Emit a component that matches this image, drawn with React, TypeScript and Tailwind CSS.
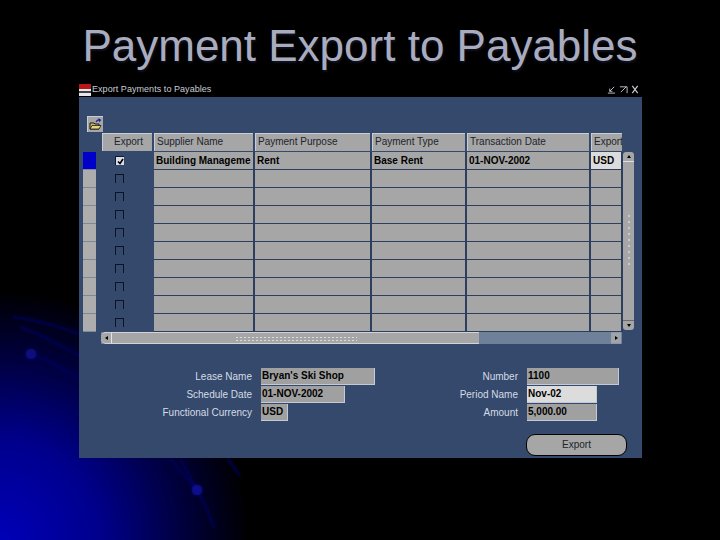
const columns = [
  { name: "Supplier Name", width: "w-[101px]", value: "Building Manageme" },
  { name: "Payment Purpose", width: "w-[117px]", value: "Rent" },
  { name: "Payment Type", width: "w-[95px]", value: "Base Rent" },
  { name: "Transaction Date", width: "w-[124px]", value: "01-NOV-2002" },
];

const rows = [0, 1, 2, 3, 4, 5, 6, 7, 8, 9];

function Backdrop() {
  return (
    <svg className="absolute inset-0" width="720" height="540" viewBox="0 0 720 540" aria-hidden="true">
      <defs>
        <radialGradient id="glow" cx="0" cy="540" r="250" gradientUnits="userSpaceOnUse">
          <stop offset="0" stopColor="#0000b8" />
          <stop offset="0.4" stopColor="#00008c" />
          <stop offset="0.72" stopColor="#000040" />
          <stop offset="1" stopColor="#000000" />
        </radialGradient>
        <filter id="soft">
          <feGaussianBlur stdDeviation="0.8" />
        </filter>
      </defs>
      <rect width="720" height="540" fill="#000" />
      <rect width="720" height="540" fill="url(#glow)" />
      <g fill="none" stroke="#06065e" strokeWidth="2" filter="url(#soft)">
        <path d="M13 317 C35 320 58 326 80 334" />
        <path d="M20 327 C40 334 60 345 80 356" />
        <path d="M31 354 C48 360 65 370 80 378" />
        <path d="M170 458 C180 472 190 482 197 490 C205 503 210 516 214 528" />
        <path d="M180 458 C186 470 192 480 197 490" />
        <path d="M227 458 C232 464 236 470 240 476" />
      </g>
      <circle cx="31" cy="354" r="5.5" fill="#0a0a80" filter="url(#soft)" />
      <circle cx="197" cy="490" r="5.5" fill="#0a0a90" filter="url(#soft)" />
    </svg>
  );
}

function FolderIcon() {
  return (
    <svg width="13" height="13" viewBox="0 0 13 13" aria-hidden="true">
      <path d="M1 5 H5 L6 6 H10 V11 H1 Z" fill="#c8b868" stroke="#1a1a10" strokeWidth="1" />
      <path d="M1 11 L3 7.5 H12 L10 11 Z" fill="#e4d488" stroke="#1a1a10" strokeWidth="0.8" />
      <path d="M7 4 C8 2 9 1.5 11 2 M9.5 0.8 L11.5 2 L10 3.6" fill="none" stroke="#1820a0" strokeWidth="1.1" />
    </svg>
  );
}

function Checkbox({ checked }: { checked?: boolean }) {
  return (
    <span className="flex h-[18px] items-start justify-center pt-[4px]">
      {checked ? (
        <span className="flex h-[9px] w-[9px] items-center justify-center border-t border-l border-[#10182a] bg-[#d8dce4]">
          <svg width="7" height="7" viewBox="0 0 7 7" aria-hidden="true">
            <path d="M1 3.5 L3 5.5 L6 1" fill="none" stroke="#000" strokeWidth="1.6" />
          </svg>
        </span>
      ) : (
        <span className="h-[9px] w-[9px] border-t border-r border-l border-[#0c1424]" />
      )}
    </span>
  );
}

function Cell({ width, value, light }: { width: string; value?: string; light?: boolean }) {
  return (
    <div
      className={`${width} h-[18px] shrink-0 overflow-hidden border-r-2 border-b border-[#2c3f5f] pl-[2px] text-[10px] leading-[17px] font-bold whitespace-nowrap text-black ${
        light && value ? "bg-[#dcdcdc]" : "bg-[#a6a6a6]"
      }`}
    >
      {value}
    </div>
  );
}

function HeaderCell({ width, name, center }: { width: string; name: string; center?: boolean }) {
  return (
    <div className={`${width} h-[18px] shrink-0 pr-[2px]`}>
      <div
        className={`h-full overflow-hidden border-t border-l border-[#c9ced6] bg-[#a6a6a6] pl-[2px] text-[10px] leading-[16px] whitespace-nowrap text-[#20242c] ${
          center ? "text-center" : ""
        }`}
      >
        {name}
      </div>
    </div>
  );
}

function Field({ width, value, light }: { width: string; value: string; light?: boolean }) {
  return (
    <div
      className={`${width} h-[17px] shrink-0 border-r border-b border-[#c4cad4] pl-[1px] text-[10px] leading-[16px] font-bold text-black ${
        light ? "bg-[#dcdcdc]" : "bg-[#a0a0a0]"
      }`}
    >
      {value}
    </div>
  );
}

function FormRow({ label, labelWidth, children }: { label: string; labelWidth: string; children: React.ReactNode }) {
  return (
    <div className="flex h-[18px] items-start">
      <span className={`${labelWidth} mr-[9px] shrink-0 text-right text-[10px] leading-[17px] whitespace-nowrap text-[#d5dbe6]`}>
        {label}
      </span>
      {children}
    </div>
  );
}

function VerticalScrollbar() {
  return (
    <div className="flex h-[178px] w-[11px] flex-col rounded-t-[3px] rounded-b-[3px] bg-[#a6a6a6]">
      <div className="flex h-[10px] items-center justify-center border-b border-[#e0e0e0]">
        <span className="h-0 w-0 border-r-[2px] border-b-[3px] border-l-[2px] border-r-transparent border-b-black border-l-transparent" />
      </div>
      <div className="flex flex-1 items-center justify-center">
        <span className="h-[56px] w-[4px] bg-[radial-gradient(#c8c8c8_35%,transparent_40%)] bg-[length:4px_6px]" />
      </div>
      <div className="flex h-[10px] items-center justify-center border-t border-[#6c6c6c]">
        <span className="h-0 w-0 border-t-[3px] border-r-[2px] border-l-[2px] border-t-black border-r-transparent border-l-transparent" />
      </div>
    </div>
  );
}

function HorizontalScrollbar() {
  return (
    <div className="ml-[22px] flex h-[12px] w-[521px] items-stretch bg-[#6f8099]">
      <div className="flex w-[378px] items-center rounded-l-[5px] border-t border-b border-[#d0d4da] bg-[#a6a6a6]">
        <span className="flex w-[10px] justify-center">
          <span className="h-0 w-0 border-t-[2px] border-r-[3px] border-b-[2px] border-t-transparent border-r-black border-b-transparent" />
        </span>
        <span className="h-full w-px bg-[#e4e4e4]" />
        <span className="ml-[123px] h-[5px] w-[122px] bg-[radial-gradient(#dcdcdc_35%,transparent_40%)] bg-[length:4px_3px]" />
      </div>
      <div className="flex-1" />
      <div className="mr-[1px] flex w-[10px] items-center justify-center border-t border-b border-[#8a98ac] bg-[#a0a4aa]">
        <span className="h-0 w-0 border-t-[2px] border-b-[2px] border-l-[3px] border-t-transparent border-b-transparent border-l-black" />
      </div>
    </div>
  );
}

export default function App() {
  return (
    <div className="relative h-[540px] w-[720px] overflow-hidden bg-black font-['Liberation_Sans',Arial,sans-serif]">
      <Backdrop />
      <div className="relative flex flex-col">
        <h1 className="mt-[21px] h-[61px] text-center text-[44px] leading-[50px] text-[#a9acbf] [text-shadow:1px_2px_2px_#10121f]">
          Payment Export to Payables
        </h1>
        <div className="ml-[79px] flex h-[376px] w-[563px] flex-col bg-[#34496b]">
          <div className="flex h-[15px] items-center bg-black pr-[3px]">
            <span className="mr-[1px] flex h-[12px] w-[12px] flex-col bg-[#e8e8e8]">
              <span className="h-[5px] bg-[#b81818]" />
              <span className="mt-[2px] h-[2px] bg-[#404048]" />
            </span>
            <span className="text-[9px] tracking-[0.05px] text-[#c8ccd4]">Export Payments to Payables</span>
            <span className="ml-auto flex items-center gap-[3px] text-[#c8ccd4]">
              <svg width="9" height="9" viewBox="0 0 10 10" aria-hidden="true">
                <path d="M1 9 H9 M3 7 L8 2 M3 4 V7 H6" fill="none" stroke="currentColor" />
              </svg>
              <svg width="9" height="9" viewBox="0 0 10 10" aria-hidden="true">
                <path d="M1 2 H9 V9 M8 2 L2 8" fill="none" stroke="currentColor" />
              </svg>
              <svg width="8" height="9" viewBox="0 0 8 10" aria-hidden="true">
                <path d="M1 1 L7 9 M7 1 L1 9" fill="none" stroke="currentColor" strokeWidth="1.3" />
              </svg>
            </span>
          </div>
          <div className="mt-[19px] ml-[8px] flex h-[16px] w-[16px] items-center justify-center border-t border-l border-[#c8ccd4] bg-[#a6a6a6]">
            <FolderIcon />
          </div>
          <div className="mt-[1px] flex h-[19px] pl-[23px]">
            <HeaderCell width="w-[52px]" name="Export" center />
            {columns.map((c) => (
              <HeaderCell key={c.name} width={c.width} name={c.name} />
            ))}
            <HeaderCell width="w-[33px]" name="Export" />
          </div>
          <div className="flex h-[180px]">
            <div className="ml-[4px] flex w-[13px] flex-col">
              {rows.map((r) => (
                <div
                  key={r}
                  className={`h-[18px] border-b border-[#7d889c] ${r === 0 ? "bg-[#0000c8]" : "bg-[#adadad]"}`}
                />
              ))}
            </div>
            <div className="w-[58px] pr-[11px]">
              {rows.map((r) => (
                <Checkbox key={r} checked={r === 0} />
              ))}
            </div>
            <div className="flex flex-col">
              {rows.map((r) => (
                <div key={r} className="flex">
                  {columns.map((c) => (
                    <Cell key={c.name} width={c.width} value={r === 0 ? c.value : undefined} />
                  ))}
                  <Cell width="w-[32px]" value={r === 0 ? "USD" : undefined} light />
                </div>
              ))}
            </div>
            <VerticalScrollbar />
          </div>
          <HorizontalScrollbar />
          <div className="mt-[24px] flex">
            <div className="flex w-[345px] flex-col">
              <FormRow label="Lease Name" labelWidth="w-[173px]">
                <Field width="w-[114px]" value="Bryan's Ski Shop" />
              </FormRow>
              <FormRow label="Schedule Date" labelWidth="w-[173px]">
                <Field width="w-[84px]" value="01-NOV-2002" />
              </FormRow>
              <FormRow label="Functional Currency" labelWidth="w-[173px]">
                <Field width="w-[27px]" value="USD" />
              </FormRow>
            </div>
            <div className="flex flex-col">
              <FormRow label="Number" labelWidth="w-[94px]">
                <Field width="w-[92px]" value="1100" />
              </FormRow>
              <FormRow label="Period Name" labelWidth="w-[94px]">
                <Field width="w-[70px]" value="Nov-02" light />
              </FormRow>
              <FormRow label="Amount" labelWidth="w-[94px]">
                <Field width="w-[70px]" value="5,000.00" />
              </FormRow>
            </div>
          </div>
          <div className="mt-[12px] mr-[15px] flex justify-end">
            <button
              type="button"
              className="h-[22px] w-[101px] rounded-[9px] border-[1.5px] border-black bg-[#a6a6a6] text-[10px] leading-[18px] text-[#20242c]"
            >
              Export
            </button>
          </div>
        </div>
      </div>
    </div>
  );
}
